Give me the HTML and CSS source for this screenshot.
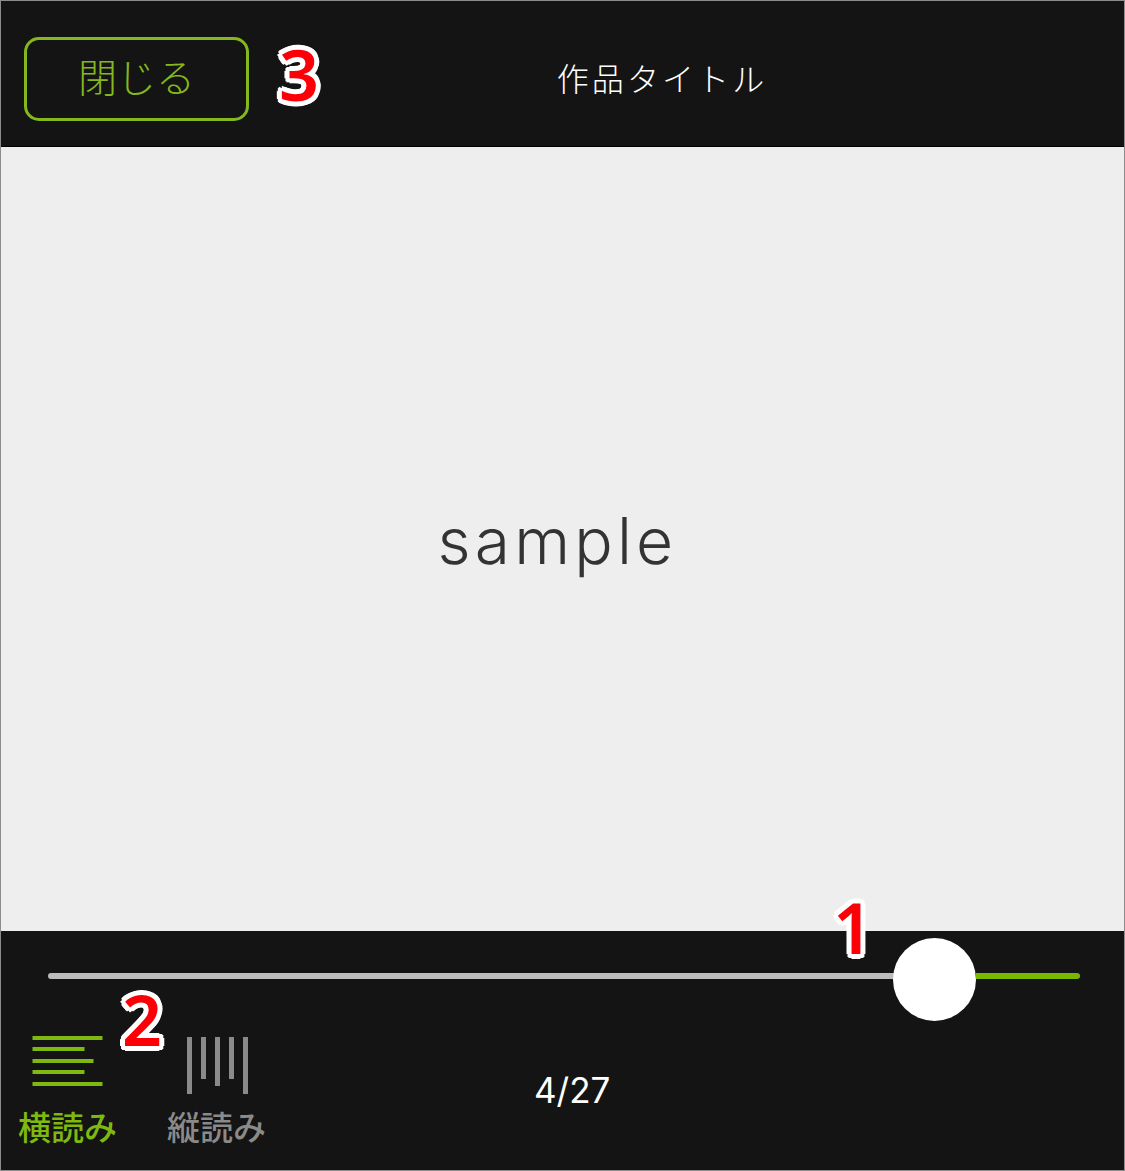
FILE: index.html
```html
<!DOCTYPE html>
<html lang="ja">
<head>
<meta charset="utf-8">
<title>作品タイトル</title>
<link rel="stylesheet" href="styles.css">
</head>
<body>
<div class="frame">
  <header class="topbar">
    <button class="close">閉じる</button>
    <h1 class="title">作品タイトル</h1>
  </header>
  <main class="page"><span class="sample">sample</span></main>
  <footer class="bottombar">
    <div class="slider">
      <div class="track-done"></div>
      <div class="thumb"></div>
      <div class="track-rest"></div>
    </div>
    <div class="controls">
      <div class="mode mode-on">
        <svg class="mode-icon" viewBox="0 0 72 50" width="72" height="50" aria-hidden="true">
          <path d="M0.5 2H70.5M0.5 13H52.5M0.5 25H61.5M0.5 36H52.5M0.5 48H70.5" fill="none" stroke="#7fb80e" stroke-width="4"/>
        </svg>
        <span>横読み</span>
      </div>
      <div class="mode mode-off">
        <svg class="mode-icon" viewBox="0 0 64 60" width="64" height="60" aria-hidden="true">
          <path d="M2.5 1V58M16.5 1V43M30.5 1V50M44.5 1V43M58.5 1V58" fill="none" stroke="#8a8a8a" stroke-width="5"/>
        </svg>
        <span>縦読み</span>
      </div>
      <div class="count">4/27</div>
    </div>
  </footer>
  <span class="mark mark-1">1</span>
  <span class="mark mark-2">2</span>
  <span class="mark mark-3">3</span>
</div>
</body>
</html>
```
FILE: styles.css
```css
* { box-sizing: border-box; }
html, body { margin: 0; padding: 0; }
body { width: 1125px; height: 1171px; overflow: hidden; font-family: "Inter", "Noto Sans CJK JP", sans-serif; }
.frame {
  position: relative;
  width: 1125px;
  height: 1171px;
  border: 1px solid #8c8c8c;
  display: flex;
  flex-direction: column;
  background: #eeeeee;
}
.topbar {
  height: 146px;
  flex: none;
  background: #141414;
  border-bottom: 1px solid #000;
  display: flex;
  align-items: center;
  padding: 11px 0 0 23px;
  position: relative;
}
.close {
  width: 225px;
  height: 84px;
  border: 3px solid #85b81c;
  border-radius: 15px;
  background: transparent;
  color: #85b81c;
  font: 300 39px/1 "Noto Sans CJK JP", sans-serif;
  padding: 0 0 7px;
}
.title {
  flex: 1;
  margin: 0;
  padding: 0 50px 4px 1px;
  text-align: center;
  color: #fff;
  font: 300 32px/1 "Noto Sans CJK JP", sans-serif;
  letter-spacing: 3.1px;
}
.page {
  flex: 1;
  display: flex;
  align-items: center;
  justify-content: center;
  padding: 4px 10px 0 0;
}
.sample {
  font: 300 64px/1 "Inter", sans-serif;
  letter-spacing: 4.2px;
  color: #333;
}
.bottombar {
  height: 239px;
  flex: none;
  background: #141414;
  display: flex;
  flex-direction: column;
  padding: 7px 44px 0 17px;
}
.slider {
  height: 83px;
  margin-left: 30px;
  display: flex;
  align-items: center;
  flex: none;
}
.track-done { width: 847px; height: 6px; margin: -8px -2px 0 0; border-radius: 3px 0 0 3px; background: #bcbcbc; }
.thumb { width: 83px; height: 83px; border-radius: 50%; background: #fff; position: relative; flex: none; }
.track-rest { flex: 1; height: 6px; margin: -8px 0 0 0; border-radius: 0 3px 3px 0; background: #7ab800; }
.controls { display: flex; align-items: flex-start; padding-top: 13px; }
.mode {
  width: 99px;
  display: flex;
  flex-direction: column;
  align-items: center;
  font: 500 33px/1 "Noto Sans CJK JP", sans-serif;
}
.mode-icon { display: block; flex: none; }
.mode-on { color: #7fb80e; margin-right: 50px; padding-top: 2px; }
.mode-on .mode-icon { margin: 0 0 24px 0; }
.mode-off { color: #8a8a8a; }
.mode-off .mode-icon { margin: 2px 0 14px 4px; }
.count { color: #fff; font: 400 35px/1 "Inter", sans-serif; margin: 39px 0 0 268px; }
.mark {
  position: absolute;
  font: 600 70px/1 "Noto Sans", sans-serif;
  color: #fb0007;
  text-shadow:
    5px 0 0 #fff, -5px 0 0 #fff, 0 5px 0 #fff, 0 -5px 0 #fff,
    4px 3px 0 #fff, -4px 3px 0 #fff, 4px -3px 0 #fff, -4px -3px 0 #fff,
    3px 4px 0 #fff, -3px 4px 0 #fff, 3px -4px 0 #fff, -3px -4px 0 #fff;
}
.mark-1 { left: 832px; top: 891px; }
.mark-2 { left: 121px; top: 983px; }
.mark-3 { left: 278px; top: 38px; }
```
